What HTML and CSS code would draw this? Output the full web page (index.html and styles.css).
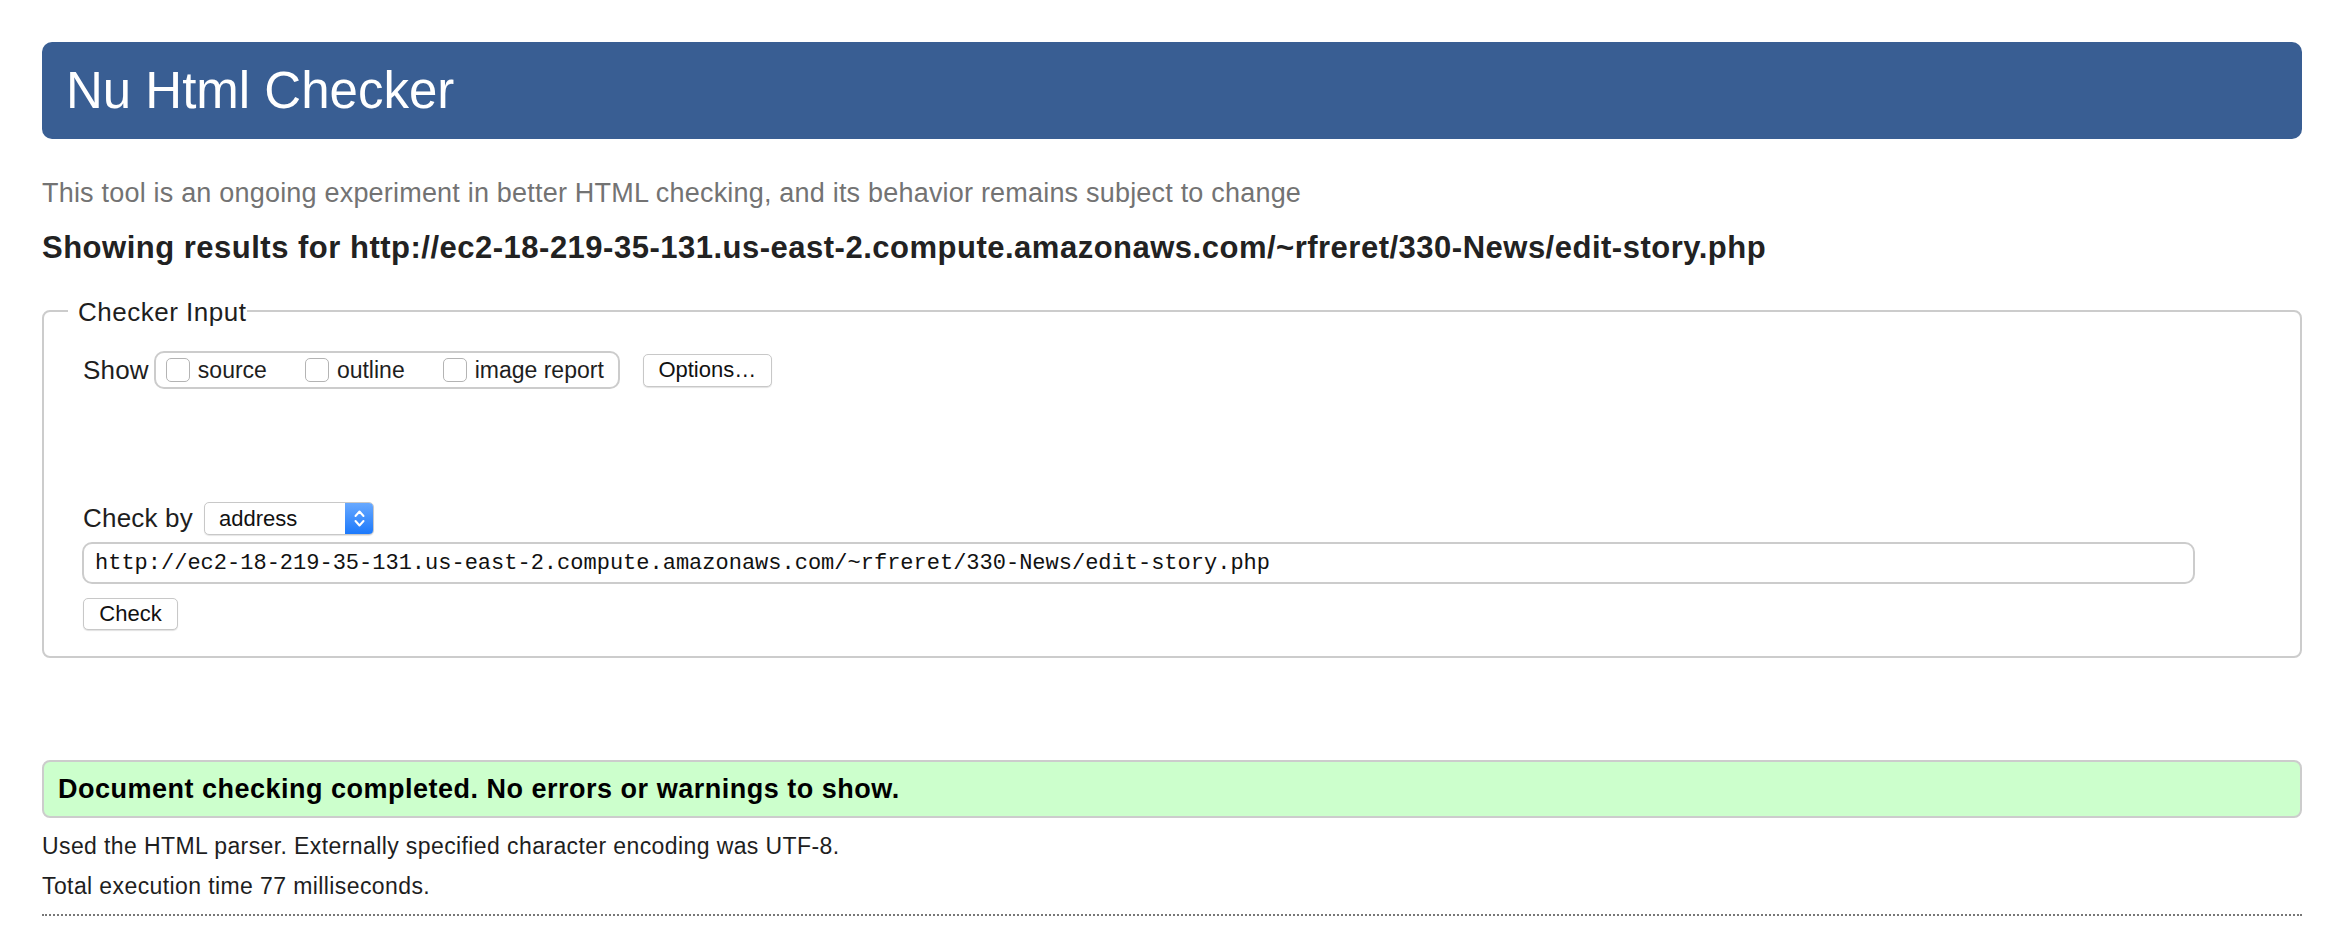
FILE: index.html
```html
<!DOCTYPE html>
<html lang="en">
<head>
<meta charset="utf-8">
<title>Showing results for http://ec2-18-219-35-131.us-east-2.compute.amazonaws.com/~rfreret/330-News/edit-story.php - Nu Html Checker</title>
<link rel="stylesheet" href="styles.css">
</head>
<body>
<h1 class="title">Nu Html Checker</h1>
<p class="subtitle">This tool is an ongoing experiment in better HTML checking, and its behavior remains subject to change</p>
<p class="results-for">Showing results for http://ec2-18-219-35-131.us-east-2.compute.amazonaws.com/~rfreret/330-News/edit-story.php</p>
<form class="checker-form">
  <fieldset class="input-box">
    <legend class="input-legend">Checker Input</legend>
    <div class="show-row">
      <span class="row-label">Show</span>
      <span class="opt-group">
        <label class="opt"><input type="checkbox" class="cb">source</label>
        <label class="opt"><input type="checkbox" class="cb">outline</label>
        <label class="opt opt-last"><input type="checkbox" class="cb">image report</label>
      </span>
      <button type="button" class="btn btn-options">Options…</button>
    </div>
    <div class="checkby-row">
      <span class="row-label">Check by</span>
      <span class="select">
        <span class="select-text">address</span>
        <span class="stepper">
          <svg width="29" height="33" viewBox="0 0 29 33">
            <path d="M10.5 14 L14.5 9.5 L18.5 14" fill="none" stroke="#fff" stroke-width="2" stroke-linecap="round" stroke-linejoin="round"/>
            <path d="M10.5 19 L14.5 23.5 L18.5 19" fill="none" stroke="#fff" stroke-width="2" stroke-linecap="round" stroke-linejoin="round"/>
          </svg>
        </span>
      </span>
    </div>
    <div class="url-input">http://ec2-18-219-35-131.us-east-2.compute.amazonaws.com/~rfreret/330-News/edit-story.php</div>
    <button type="button" class="btn btn-check">Check</button>
  </fieldset>
</form>
<div class="success">Document checking completed. No errors or warnings to show.</div>
<p class="details">Used the HTML parser. Externally specified character encoding was UTF-8.</p>
<p class="details">Total execution time 77 milliseconds.</p>
<div class="dotted-rule"></div>
</body>
</html>
```

FILE: styles.css
```css
html, body {
  margin: 0;
  background: #ffffff;
}

body {
  padding: 42px 48px 0 42px;
  font-family: "Liberation Sans", Arial, Helvetica, sans-serif;
  color: #1e1e1e;
}

.title {
  margin: 0;
  height: 97px;
  line-height: 97px;
  padding-left: 24px;
  background: #395e93;
  color: #ffffff;
  border-radius: 10px;
  font-size: 51px;
  font-weight: normal;
}

.subtitle {
  margin: 39px 0 0 0;
  font-size: 27px;
  letter-spacing: 0.2px;
  line-height: 30px;
  color: #737373;
}

.results-for {
  margin: 23px 0 0 0;
  font-size: 31px;
  letter-spacing: 0.5px;
  line-height: 34px;
  font-weight: bold;
  color: #222222;
}

.checker-form {
  margin: 30px 0 0 0;
}

.input-box {
  margin: 0;
  padding: 0 0 26px 24px;
  border: 2px solid #cccccc;
  border-radius: 8px;
  min-width: 0;
}

.input-legend {
  padding: 3px 1px 0 10px;
  font-size: 26px;
  letter-spacing: 0.5px;
  line-height: 28px;
  color: #1e1e1e;
}

.show-row {
  display: flex;
  align-items: center;
  height: 38px;
  margin: 25px 0 0 15px;
}

.row-label {
  font-size: 26px;
  letter-spacing: 0.2px;
  color: #1e1e1e;
}

.opt-group {
  display: inline-flex;
  align-items: center;
  box-sizing: border-box;
  height: 38px;
  margin-left: 5px;
  padding: 0 14px 0 10px;
  border: 2px solid #cccccc;
  border-radius: 10px;
}

.opt {
  display: inline-flex;
  align-items: center;
  font-size: 23px;
  color: #1e1e1e;
  margin-right: 38px;
}

.opt-last {
  margin-right: 0;
}

.cb {
  appearance: none;
  -webkit-appearance: none;
  box-sizing: border-box;
  width: 24px;
  height: 24px;
  margin: 0 8px 0 0;
  border: 1.5px solid #b4b4b4;
  border-radius: 5px;
  background: #ffffff;
}

.btn {
  box-sizing: border-box;
  background: #ffffff;
  border: 1px solid #c8c8c8;
  border-radius: 5px;
  box-shadow: 0 1px 1px rgba(0, 0, 0, 0.12);
  font-family: "Liberation Sans", Arial, Helvetica, sans-serif;
  font-size: 22px;
  color: #111111;
  padding: 0;
}

.btn-options {
  width: 129px;
  height: 33px;
  margin-left: 23px;
}

.checkby-row {
  display: flex;
  align-items: center;
  height: 33px;
  margin: 113px 0 0 15px;
}

.select {
  display: inline-flex;
  box-sizing: border-box;
  width: 170px;
  height: 33px;
  margin-left: 11px;
  border: 1px solid #c8c8c8;
  border-radius: 5px;
  background: #ffffff;
  box-shadow: 0 1px 1px rgba(0, 0, 0, 0.1);
  overflow: hidden;
}

.select-text {
  flex: 1;
  padding-left: 14px;
  font-size: 22px;
  line-height: 31px;
  color: #111111;
}

.stepper {
  display: block;
  width: 29px;
  height: 33px;
  margin: -1px -1px -1px 0;
  background: linear-gradient(#6aaaff, #1a78fb);
  border-radius: 0 5px 5px 0;
}

.stepper svg {
  display: block;
}

.url-input {
  box-sizing: border-box;
  width: 2113px;
  height: 42px;
  margin: 7px 0 0 14px;
  padding: 8px 0 0 11px;
  border: 2px solid #cccccc;
  border-radius: 10px;
  font-family: "Liberation Mono", "DejaVu Sans Mono", monospace;
  font-size: 22px;
  line-height: 24px;
  color: #111111;
  white-space: nowrap;
}

.btn-check {
  display: block;
  width: 95px;
  height: 32px;
  margin: 14px 0 0 15px;
}

.success {
  box-sizing: border-box;
  height: 58px;
  margin-top: 102px;
  padding-left: 14px;
  border: 2px solid #cccccc;
  border-radius: 8px;
  background: #ccffcc;
  font-size: 27px;
  letter-spacing: 0.5px;
  font-weight: bold;
  line-height: 54px;
  color: #000000;
}

.details {
  margin: 0;
  font-size: 23px;
  letter-spacing: 0.4px;
  line-height: 40px;
  color: #1e1e1e;
}

.success + .details {
  margin-top: 8px;
}

.dotted-rule {
  margin-top: 8px;
  border-top: 2px dotted #777777;
}
```
